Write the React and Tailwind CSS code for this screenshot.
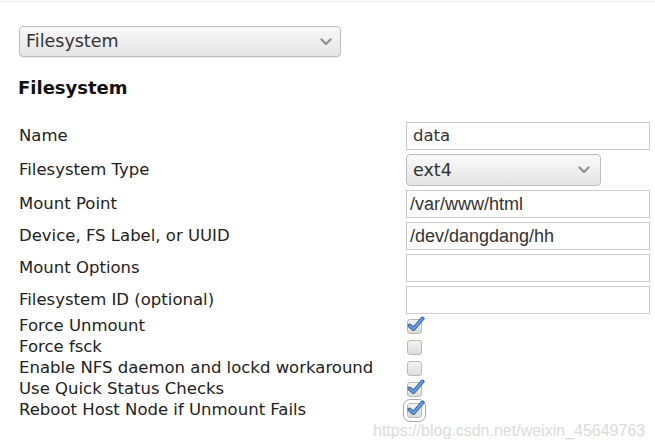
const Chevron = () => (
  <svg width="12" height="8" viewBox="0 0 12 8" className="shrink-0">
    <path d="M1.5 1.5 L6 6 L10.5 1.5" fill="none" stroke="#939393" strokeWidth="2.4" strokeLinecap="round" strokeLinejoin="round" />
  </svg>
);

const CheckBox = ({ checked, focused }) => (
  <div
    className={[
      "relative h-[15px] w-[15px] shrink-0 rounded-[3px] border border-[#b9bcb4] bg-gradient-to-b from-[#f4f4f2] to-[#dcdcd8]",
      focused ? "outline outline-1 outline-[#a9a9a9] outline-offset-[3px]" : "",
    ].join(" ")}
  >
    {checked ? (
      <svg width="18" height="16" viewBox="0 0 18 16" className="absolute left-[-1px] top-[-4px]">
        <path d="M2.5 9.5 L6.5 13 L15.5 2.5" fill="none" stroke="#2f63a8" strokeWidth="4" strokeLinecap="round" strokeLinejoin="round" />
        <path d="M2.5 9.5 L6.5 13 L15.5 2.5" fill="none" stroke="#6a9de0" strokeWidth="2" strokeLinecap="round" strokeLinejoin="round" />
      </svg>
    ) : null}
  </div>
);

const fields = [
  { label: "Name", type: "input", value: "data", font: "dejavu" },
  { label: "Filesystem Type", type: "select", value: "ext4" },
  { label: "Mount Point", type: "input", value: "/var/www/html", font: "arial" },
  { label: "Device, FS Label, or UUID", type: "input", value: "/dev/dangdang/hh", font: "arial" },
  { label: "Mount Options", type: "input", value: "" },
  { label: "Filesystem ID (optional)", type: "input", value: "" },
];

const checks = [
  { label: "Force Unmount", checked: true },
  { label: "Force fsck", checked: false },
  { label: "Enable NFS daemon and lockd workaround", checked: false },
  { label: "Use Quick Status Checks", checked: true },
  { label: "Reboot Host Node if Unmount Fails", checked: true, focused: true },
];

export default function App() {
  return (
    <div className="relative h-[448px] w-[655px] overflow-hidden bg-white font-['DejaVu_Sans',sans-serif] text-[16.5px] text-[#222]">
      <div className="h-[2px] border-b border-[#ececec]" />
      <div className="pl-[19px] pt-[24px]">
        <div className="flex h-[31px] w-[322px] items-center justify-between rounded-[4px] border border-[#bdbdbd] bg-gradient-to-b from-[#fafafa] to-[#e4e4e4] pl-[6px] pr-[8px] text-[17.5px] text-[#333] shadow-[0_1px_1px_rgba(0,0,0,0.08)]">
          <span>Filesystem</span>
          <Chevron />
        </div>
        <h2 className="ml-[-1px] mt-[18px] text-[18px] font-bold leading-[26px] text-[#111]">Filesystem</h2>
      </div>

      <div className="mt-[21px] flex flex-col gap-[4px] pl-[19px]">
        {fields.map((field) => (
          <div className="flex items-center" key={field.label}>
            <div className="w-[387px] shrink-0">{field.label}</div>
            {field.type === "select" ? (
              <div className="flex h-[32px] w-[195px] shrink-0 items-center justify-between rounded-[4px] border border-[#bdbdbd] bg-gradient-to-b from-[#fafafa] to-[#e4e4e4] pl-[6px] pr-[10px] text-[17.5px] text-[#333]">
                <span>{field.value}</span>
                <Chevron />
              </div>
            ) : (
              <div
                className={[
                  "flex h-[28px] w-[244px] shrink-0 items-center border border-[#c9cdd2] bg-white text-[#333]",
                  field.font === "arial" ? "pl-[3px] font-['Liberation_Sans',sans-serif] text-[18px]" : "pl-[6px]",
                ].join(" ")}
              >
                {field.value}
              </div>
            )}
          </div>
        ))}
      </div>

      <div className="mt-[2px] flex flex-col pl-[19px]">
        {checks.map((item) => (
          <div className="flex h-[21px] items-center" key={item.label}>
            <div className="w-[388px] shrink-0">{item.label}</div>
            <CheckBox checked={item.checked} focused={item.focused} />
          </div>
        ))}
      </div>

      <div className="absolute left-[373px] top-[419px] font-['Liberation_Sans',sans-serif] text-[16px] text-[#dcdcdc]">
        https://blog.csdn.net/weixin_45649763
      </div>
    </div>
  );
}
